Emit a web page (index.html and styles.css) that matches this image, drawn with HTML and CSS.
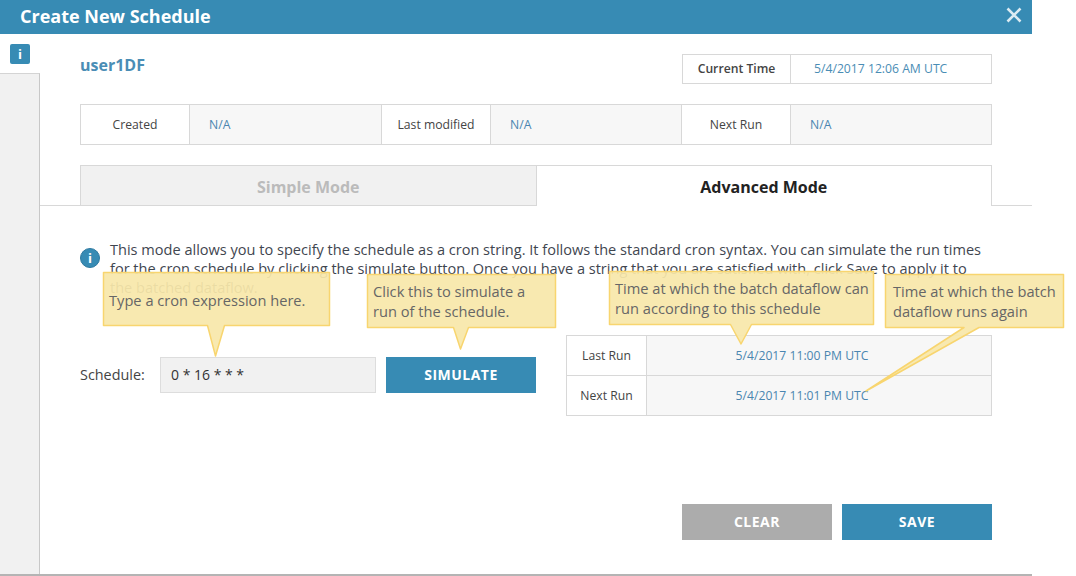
FILE: index.html
```html
<!DOCTYPE html>
<html lang="en">
<head>
    <meta charset="UTF-8">
    <title>Create New Schedule</title>
    <link rel="stylesheet" href="styles.css">
</head>
<body>
    <div class="dialog">
        <div class="dialog-header">
            <h2>Create New Schedule</h2>
            <svg class="close" width="16" height="16" viewBox="0 0 16 16"><path d="M1.500 1.500 14.500 14.500M14.500 1.500 1.500 14.500"/></svg>
        </div>
        <div class="dialog-body">
            <div class="sidebar">
                <div class="sidebar-top"><span class="info-tab">i</span></div>
                <div class="sidebar-rest"></div>
            </div>
            <div class="main">
                <div class="title-row">
                    <div class="df-name">user1DF</div>
                    <div class="time-box">
                        <div class="time-label">Current Time</div>
                        <div class="time-value">5/4/2017 12:06 AM UTC</div>
                    </div>
                </div>
                <div class="meta-row">
                    <div class="meta-label meta-first">Created</div>
                    <div class="meta-value">N/A</div>
                    <div class="meta-label">Last modified</div>
                    <div class="meta-value">N/A</div>
                    <div class="meta-label">Next Run</div>
                    <div class="meta-value">N/A</div>
                </div>
                <div class="tabs">
                    <div class="tab">Simple Mode</div>
                    <div class="tab tab-active">Advanced Mode</div>
                </div>
                <div class="help">
                    <span class="help-icon">i</span>
                    <p>This mode allows you to specify the schedule as a cron string. It follows the standard cron syntax. You can simulate the run times for the cron schedule by clicking the simulate button. Once you have a string that you are satisfied with, click Save to apply it to the batched dataflow.</p>
                </div>
                <div class="schedule-row">
                    <label class="schedule-label">Schedule:</label>
                    <div class="cron-input">0 * 16 * * *</div>
                    <button class="btn btn-blue">SIMULATE</button>
                    <div class="runs">
                        <div class="run-row">
                            <div class="run-label">Last Run</div>
                            <div class="run-value">5/4/2017 11:00 PM UTC</div>
                        </div>
                        <div class="run-row">
                            <div class="run-label">Next Run</div>
                            <div class="run-value">5/4/2017 11:01 PM UTC</div>
                        </div>
                    </div>
                </div>
                <div class="actions">
                    <button class="btn btn-grey">CLEAR</button>
                    <button class="btn btn-blue">SAVE</button>
                </div>
            </div>
        </div>

        <!-- callouts sit on top of the form -->
        <svg class="balloons" width="1076" height="576" viewBox="0 0 1076 576">
            <path d="M103.500 272.500H329.500V325.500H224.500L215.500 356 207.500 325.500H103.500Z"/>
            <path d="M367.500 274.500H555.500V327.500H468.500L460.500 349 453.500 327.500H367.500Z"/>
            <path d="M609.500 271.500H873.500V324.500H751.500L741 344 730.500 324.500H609.500Z"/>
            <path d="M885.500 274.500H1063.500V327.500H979L866 391 964 327.500H885.500Z"/>
        </svg>
        <div class="tip tip-cron">Type a cron expression here.</div>
        <div class="tip tip-simulate">Click this to simulate a<br>run of the schedule.</div>
        <div class="tip tip-last">Time at which the batch dataflow can<br>run according to this schedule</div>
        <div class="tip tip-next">Time at which the batch<br>dataflow runs again</div>
    </div>
</body>
</html>
```

FILE: styles.css
```css
body {
    margin: 0;
    background-color: white;
    font-family: "Open Sans", Arial, sans-serif;
    color: #444;
}
.dialog {
    position: relative;
    width: 1032px;
    height: 576px;
    display: flex;
    flex-direction: column;
    box-sizing: border-box;
    border-bottom: 2px solid #b4b4b4;
}
.dialog-header {
    height: 34px;
    flex: none;
    box-sizing: border-box;
    background-color: #378bb4;
    display: flex;
    align-items: center;
    justify-content: space-between;
    padding: 0 10px 2px 20px;
}
.dialog-header h2 {
    margin: 0;
    font-size: 18px;
    font-weight: 700;
    color: white;
}
.close {
    align-self: flex-start;
    margin-top: 7px;
}
.close path {
    stroke: #dcebf2;
    stroke-width: 2.6;
    fill: none;
}
.dialog-body {
    flex: 1;
    display: flex;
}
.sidebar {
    width: 40px;
    flex: none;
    display: flex;
    flex-direction: column;
}
.sidebar-top {
    height: 39px;
    box-sizing: border-box;
    padding: 10px 0 0 10px;
}
.info-tab {
    display: block;
    width: 20px;
    height: 20px;
    border-radius: 2px;
    background-color: #378bb4;
    color: white;
    font-size: 13px;
    font-weight: 700;
    line-height: 20px;
    text-align: center;
}
.sidebar-rest {
    flex: 1;
    background-color: #f1f1f1;
    border-top: 1px solid #d4d4d4;
    border-right: 1px solid #c8c8c8;
}
.main {
    flex: 1;
    min-width: 0;
}
.title-row {
    display: flex;
    justify-content: space-between;
    margin: 20px 40px 0;
    height: 30px;
}
.df-name {
    font-size: 16px;
    font-weight: 700;
    color: #4a8db5;
    line-height: 22px;
}
.time-box {
    display: flex;
    width: 310px;
    box-sizing: border-box;
    border: 1px solid #d8d8d8;
    font-size: 12.2px;
    line-height: 28px;
}
.time-label {
    width: 108px;
    flex: none;
    box-sizing: border-box;
    text-align: center;
    font-weight: 600;
    border-right: 1px solid #d8d8d8;
}
.time-value {
    padding-left: 23px;
    color: #4a8db5;
}
.meta-row {
    display: grid;
    grid-template-columns: 109px 191px 110px 190px 110px 1fr;
    height: 41px;
    box-sizing: border-box;
    margin: 20px 40px 0;
    border: 1px solid #d8d8d8;
    font-size: 12.2px;
    line-height: 39px;
}
.meta-label {
    box-sizing: border-box;
    text-align: center;
    background-color: white;
    border-right: 1px solid #d8d8d8;
    border-left: 1px solid #d8d8d8;
}
.meta-first {
    border-left: none;
}
.meta-value {
    padding-left: 19px;
    background-color: #f7f7f7;
    color: #4a86b0;
}
.tabs {
    display: flex;
    height: 41px;
    margin-top: 20px;
    padding: 0 40px;
    box-sizing: border-box;
    border-bottom: 1px solid #d8d8d8;
}
.tab {
    flex: 1;
    box-sizing: border-box;
    height: 41px;
    border: 1px solid #d8d8d8;
    background-color: #f1f1f1;
    color: #bbb;
    font-size: 16px;
    font-weight: 700;
    line-height: 43px;
    text-align: center;
}
.tab-active {
    border-left: none;
    border-bottom: none;
    background-color: white;
    color: #222;
}
.help {
    display: flex;
    margin: 34px 40px 0;
    height: 60px;
}
.help-icon {
    flex: none;
    box-sizing: border-box;
    width: 20px;
    height: 20px;
    margin: 8px 10px 0 0;
    border-radius: 50%;
    border: 1px solid #2f7aa1;
    background-color: #378bb4;
    color: white;
    font-size: 13px;
    font-weight: 700;
    line-height: 18px;
    text-align: center;
}
.help p {
    margin: 0;
    font-size: 14.55px;
    line-height: 19px;
    color: #3f4650;
}
.schedule-row {
    position: relative;
    display: flex;
    align-items: flex-start;
    margin: 57px 40px 0;
    height: 36px;
}
.schedule-label {
    width: 80px;
    flex: none;
    font-size: 14.4px;
    line-height: 36px;
}
.cron-input {
    width: 216px;
    height: 36px;
    flex: none;
    box-sizing: border-box;
    margin-right: 10px;
    padding-left: 10px;
    border: 1px solid #ddd;
    background-color: #f1f1f1;
    font-size: 14px;
    line-height: 34px;
    color: #333;
}
.btn {
    width: 150px;
    height: 36px;
    flex: none;
    border: none;
    padding: 0 0 2px;
    color: white;
    font-family: inherit;
    font-size: 14px;
    font-weight: 700;
    letter-spacing: 0.5px;
}
.btn-blue {
    background-color: #378bb4;
}
.btn-grey {
    background-color: #acacac;
}
.runs {
    position: absolute;
    right: 0;
    top: -22px;
    width: 426px;
    box-sizing: border-box;
    border: 1px solid #d8d8d8;
    font-size: 12.2px;
}
.run-row {
    display: flex;
    box-sizing: border-box;
    height: 39px;
    line-height: 39px;
}
.run-row + .run-row {
    height: 40px;
    border-top: 1px solid #d8d8d8;
}
.run-label {
    width: 80px;
    flex: none;
    box-sizing: border-box;
    text-align: center;
    border-right: 1px solid #d8d8d8;
}
.run-value {
    flex: 1;
    padding-right: 34px;
    text-align: center;
    background-color: #f7f7f7;
    color: #4a86b0;
}
.actions {
    display: flex;
    justify-content: flex-end;
    gap: 10px;
    margin: 111px 40px 0;
}
.balloons {
    position: absolute;
    left: 0;
    top: 0;
    pointer-events: none;
}
.balloons path {
    fill: rgba(248, 231, 170, 0.93);
    stroke: #f8d56f;
    stroke-width: 1.5;
    stroke-linejoin: round;
}
.tip {
    position: absolute;
    font-size: 14.65px;
    line-height: 20px;
    color: #666;
    white-space: nowrap;
}
.tip-cron {
    left: 109px;
    top: 290px;
}
.tip-simulate {
    left: 373px;
    top: 281px;
}
.tip-last {
    left: 615px;
    top: 278px;
}
.tip-next {
    left: 893px;
    top: 281px;
}
```
